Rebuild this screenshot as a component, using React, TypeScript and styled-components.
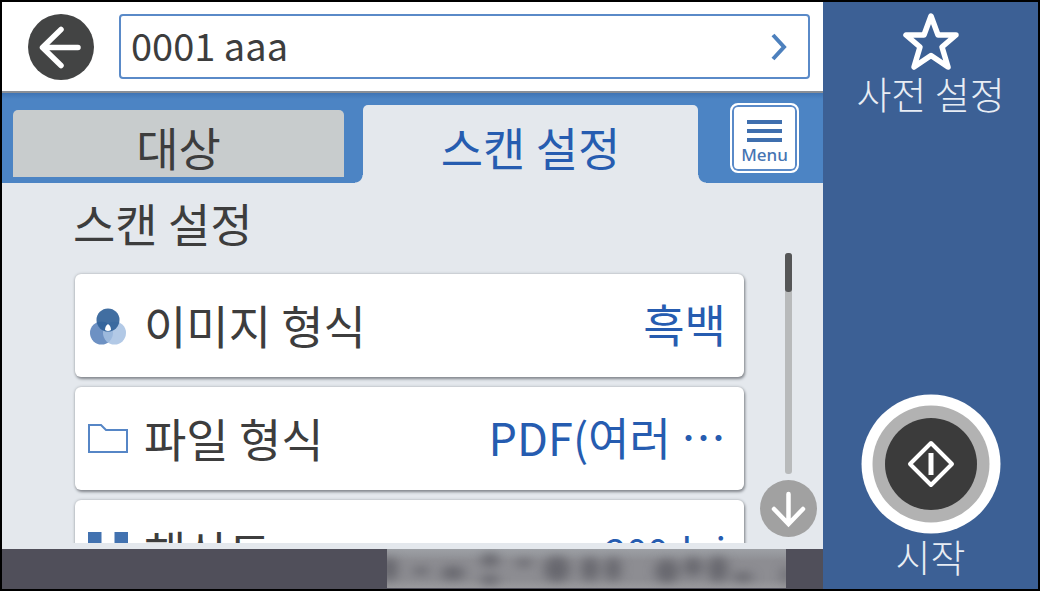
import React from "react";
import styled, { createGlobalStyle } from "styled-components";

const korean = '"Noto Sans CJK KR", sans-serif';

const GlobalStyle = createGlobalStyle`
  *, *::before, *::after { box-sizing: border-box; }
  body { margin: 0; background: #fff; font-family: ${korean}; color: #3d3d3d; }
  button { border: 0; margin: 0; padding: 0; background: none; font: inherit; color: inherit; cursor: pointer; }
  svg { display: block; }
`;

const Screen = styled.div`
  display: flex;
  height: calc(100vh - 4px);
  min-height: 480px;
  margin-right: 2px;
  border: 2px solid #000;
`;

const Main = styled.main`
  display: flex;
  flex-direction: column;
  flex: 1;
  min-width: 0;
  background: #e4e8ed;
`;

const Header = styled.header`
  display: flex;
  align-items: center;
  gap: 25px;
  height: 91px;
  padding: 0 13px 0 26px;
  background: #fff;
  border-bottom: 2px solid #8a8f96;
`;

const BackButton = styled.button`
  flex: none;
  width: 66px;
  height: 66px;
`;

const Destination = styled.button`
  display: flex;
  align-items: center;
  justify-content: space-between;
  flex: 1;
  height: 65px;
  padding: 0 20px 0 10px;
  border: 2px solid #5a8ac8;
  border-radius: 4px;
  font-size: 38px;
  line-height: 52px;
`;

const DestinationName = styled.span`
  padding-bottom: 4px;
`;

const TabBar = styled.div`
  display: flex;
  height: 90px;
  padding: 0 24px 0 11px;
  background: linear-gradient(#3f74b5, #4c84c4 6px);
`;

const Tabs = styled.div`
  display: flex;
  align-items: flex-end;
  gap: 19px;
  flex: 1;
  margin-right: 32px;
`;

const Tab = styled.button<{ $active?: boolean }>`
  position: relative;
  flex: ${(p) => (p.$active ? 335 : 331)} 0 0;
  height: ${(p) => (p.$active ? 78 : 67)}px;
  margin-bottom: ${(p) => (p.$active ? 0 : 6)}px;
  padding-top: 4px;
  border-radius: 5px 5px 0 0;
  background: ${(p) => (p.$active ? "#e4e8ed" : "#c8cccd")};
  color: ${(p) => (p.$active ? "#265cb0" : "#3d3d3d")};
  font-size: 46px;
  line-height: 60px;

  &::before,
  &::after {
    content: "";
    display: ${(p) => (p.$active ? "block" : "none")};
    position: absolute;
    bottom: 0;
    width: 8px;
    height: 8px;
  }
  &::before {
    right: 100%;
    background: radial-gradient(circle at 0 0, transparent 7px, #e4e8ed 8px);
  }
  &::after {
    left: 100%;
    background: radial-gradient(circle at 100% 0, transparent 7px, #e4e8ed 8px);
  }
`;

const MenuButton = styled.button`
  display: flex;
  flex-direction: column;
  align-items: center;
  flex: none;
  width: 69px;
  height: 70px;
  margin-top: 10px;
  padding-top: 13px;
  border: 2px solid #fff;
  border-radius: 8px;
  background: #fff;
  box-shadow: inset 0 0 0 2px #5a8ac8;
  color: #4674b2;
  font-family: "Noto Sans", sans-serif;
  font-size: 17px;
  font-weight: 500;
  line-height: 26px;
`;

const Content = styled.section`
  display: flex;
  flex: 1;
  min-height: 0;
  padding: 0 6px 6px 70px;
`;

const Settings = styled.div`
  display: flex;
  flex-direction: column;
  flex: 1;
  min-width: 0;
  overflow: hidden;
`;

const Title = styled.h1`
  flex: none;
  margin: 0 0 20px;
  padding: 7px 0 0 1px;
  font-size: 46px;
  font-weight: 400;
  line-height: 64px;
`;

const List = styled.div`
  display: flex;
  flex-direction: column;
  gap: 10px;
  padding: 0 4px 0 3px;
`;

const Row = styled.button`
  display: flex;
  align-items: center;
  flex: none;
  gap: 16px;
  height: 103px;
  padding: 0 18px 0 13px;
  border-radius: 6px;
  background: #fff;
  box-shadow: 1px 2px 3px #85898f, 0 0 3px #a9adb2;
  text-align: left;
`;

const Label = styled.span`
  padding-bottom: 4px;
  font-size: 46px;
  line-height: 60px;
`;

const Value = styled.span<{ $compact?: boolean }>`
  flex: 1;
  padding-bottom: 4px;
  color: #265cb0;
  font-size: ${(p) => (p.$compact ? 38 : 45)}px;
  line-height: ${(p) => (p.$compact ? 52 : 60)}px;
  text-align: right;
  white-space: nowrap;
`;

const Scroller = styled.div`
  display: flex;
  flex-direction: column;
  align-items: center;
  flex: none;
  gap: 6px;
  width: 57px;
  margin-left: 12px;
  padding: 70px 0 6px;
`;

const Track = styled.div`
  flex: 1;
  width: 7px;
  border-radius: 3px;
  background: #b8babb;
`;

const Thumb = styled.div`
  height: 39px;
  border-radius: 3px;
  background: #555657;
`;

const RoundButton = styled.button`
  width: 57px;
  height: 57px;
`;

const StatusBar = styled.footer`
  display: flex;
  justify-content: flex-end;
  height: 40px;
  padding-right: 37px;
  background: #504f5a;
`;

const StatusText = styled.div`
  width: 51%;
  max-width: 399px;
  height: 39px;
  background: linear-gradient(#9da0a5, #8d8d92 12px, #8d8d92 30px, #9a9a9d);
`;

const Side = styled.aside`
  display: flex;
  flex-direction: column;
  align-items: center;
  justify-content: space-between;
  flex: none;
  width: 215px;
  padding: 9px 0 11px;
  background: #3c6095;
`;

const SideButton = styled.button`
  display: flex;
  flex-direction: column;
  align-items: center;
  color: #e8edf4;
  font-size: 38px;
  font-weight: 300;
  line-height: 44px;
`;

const BackIcon = () => (
  <svg viewBox="0 0 66 66" width="66" height="66" aria-hidden="true">
    <circle cx="33" cy="33" r="33" fill="#434444" />
    <path d="M33 15.500 L14.500 33.500 L33 51.500 M15 33.500 H50" fill="none" stroke="#fff" strokeWidth="5.500" strokeLinecap="round" strokeLinejoin="round" />
  </svg>
);

const ChevronIcon = () => (
  <svg viewBox="0 0 18 28" width="18" height="28" aria-hidden="true">
    <path d="M3 2 L14 14 L3 26" fill="none" stroke="#4d80bd" strokeWidth="4" />
  </svg>
);

const MenuIcon = () => (
  <svg viewBox="0 0 36 24" width="36" height="24" aria-hidden="true">
    <path d="M0 4 H35 M0 13 H35 M0 22 H35" stroke="#3f6fae" strokeWidth="4" />
  </svg>
);

const ColorIcon = () => (
  <svg viewBox="0 0 40 40" width="40" height="40" aria-hidden="true">
    <circle cx="13.500" cy="27" r="11.500" fill="#6d91c3" />
    <circle cx="26.500" cy="27" r="11.500" fill="#a4bfe2" fillOpacity="0.850" />
    <circle cx="20" cy="14" r="11.500" fill="#316299" fillOpacity="0.920" />
    <path d="M20 18 Q23 20 23 24 Q20 26 17 24 Q17 20 20 18" fill="#fff" />
  </svg>
);

const FolderIcon = () => (
  <svg viewBox="0 0 40 40" width="40" height="40" aria-hidden="true">
    <path d="M1 6 H13 L18 11 H39 V33 H1 Z" fill="#fff" stroke="#5686c6" strokeWidth="2" />
  </svg>
);

const ResolutionIcon = () => (
  <svg viewBox="0 0 40 40" width="40" height="40" aria-hidden="true">
    <path d="M0 0 H13.500 V13.500 H0 Z M26.500 0 H40 V13.500 H26.500 Z M13.500 13.500 H26.500 V26.500 H13.500 Z M0 26.500 H13.500 V40 H0 Z M26.500 26.500 H40 V40 H26.500 Z" fill="#4272b0" />
  </svg>
);

const DownIcon = () => (
  <svg viewBox="0 0 57 57" width="57" height="57" aria-hidden="true">
    <circle cx="28.500" cy="28.500" r="28.500" fill="#a1a1a1" />
    <path d="M28.500 14 V43 M14 29 L28.500 44 L43 29" fill="none" stroke="#fff" strokeWidth="4.500" strokeLinecap="round" strokeLinejoin="miter" />
  </svg>
);

const StarIcon = () => (
  <svg viewBox="0 0 60 60" width="60" height="60" aria-hidden="true">
    <path d="M30 5 L37 24 H55 L41 36 L47 56 L30 44.500 L13 56 L19 36 L5 24 H23 Z" fill="none" stroke="#fff" strokeWidth="5.500" strokeLinejoin="round" />
  </svg>
);

const StartIcon = () => (
  <svg viewBox="0 0 140 140" width="140" height="140" aria-hidden="true">
    <circle cx="70" cy="70" r="69.500" fill="#fff" />
    <circle cx="70" cy="70" r="58.500" fill="#b2b2b2" />
    <circle cx="70" cy="70" r="46" fill="#3b3b3b" />
    <path d="M70 49 L91 70 L70 91 L49 70 Z" fill="none" stroke="#fff" strokeWidth="4" strokeLinejoin="round" />
    <path d="M70 59 V81" stroke="#fff" strokeWidth="5" />
  </svg>
);

const smudges = [
  { x: 2, y: 20, rx: 9, ry: 12 },
  { x: 34, y: 22, rx: 9, ry: 4 },
  { x: 66, y: 24, rx: 12, ry: 7 },
  { x: 103, y: 11, rx: 9, ry: 7 },
  { x: 103, y: 31, rx: 9, ry: 5 },
  { x: 137, y: 14, rx: 8, ry: 4 },
  { x: 170, y: 20, rx: 13, ry: 13 },
  { x: 203, y: 20, rx: 9, ry: 12 },
  { x: 226, y: 20, rx: 8, ry: 12 },
  { x: 280, y: 22, rx: 12, ry: 12 },
  { x: 306, y: 18, rx: 9, ry: 10 },
  { x: 331, y: 20, rx: 10, ry: 13 },
  { x: 356, y: 28, rx: 10, ry: 5 },
  { x: 399, y: 26, rx: 4, ry: 9 },
];

const Smudge = () => (
  <svg viewBox="0 0 399 39" width="100%" height="39" preserveAspectRatio="none" aria-hidden="true">
    <filter id="soften" x="-5%" y="-50%" width="110%" height="200%" colorInterpolationFilters="sRGB">
      <feGaussianBlur stdDeviation="6 5" />
    </filter>
    <g filter="url(#soften)" fill="#54545c" fillOpacity="0.650">
      {smudges.map((s) => (
        <ellipse key={`${s.x}-${s.y}`} cx={s.x} cy={s.y} rx={s.rx} ry={s.ry} />
      ))}
    </g>
  </svg>
);

const rows = [
  { label: "이미지 형식", value: "흑백", compact: false, Icon: ColorIcon },
  { label: "파일 형식", value: "PDF(여러 ⋯", compact: false, Icon: FolderIcon },
  { label: "해상도", value: "200dpi", compact: true, Icon: ResolutionIcon },
];

export default function App() {
  return (
    <>
      <GlobalStyle />
      <Screen>
        <Main>
          <Header>
            <BackButton type="button" aria-label="뒤로">
              <BackIcon />
            </BackButton>
            <Destination type="button">
              <DestinationName>0001 aaa</DestinationName>
              <ChevronIcon />
            </Destination>
          </Header>
          <TabBar>
            <Tabs role="tablist">
              <Tab type="button" role="tab" aria-selected={false}>대상</Tab>
              <Tab type="button" role="tab" aria-selected $active>스캔 설정</Tab>
            </Tabs>
            <MenuButton type="button">
              <MenuIcon />
              Menu
            </MenuButton>
          </TabBar>
          <Content>
            <Settings>
              <Title>스캔 설정</Title>
              <List>
                {rows.map(({ label, value, compact, Icon }) => (
                  <Row type="button" key={label}>
                    <Icon />
                    <Label>{label}</Label>
                    <Value $compact={compact}>{value}</Value>
                  </Row>
                ))}
              </List>
            </Settings>
            <Scroller>
              <Track>
                <Thumb />
              </Track>
              <RoundButton type="button" aria-label="아래로">
                <DownIcon />
              </RoundButton>
            </Scroller>
          </Content>
          <StatusBar>
            <StatusText>
              <Smudge />
            </StatusText>
          </StatusBar>
        </Main>
        <Side>
          <SideButton type="button">
            <StarIcon />
            사전 설정
          </SideButton>
          <SideButton type="button">
            <StartIcon />
            시작
          </SideButton>
        </Side>
      </Screen>
    </>
  );
}
